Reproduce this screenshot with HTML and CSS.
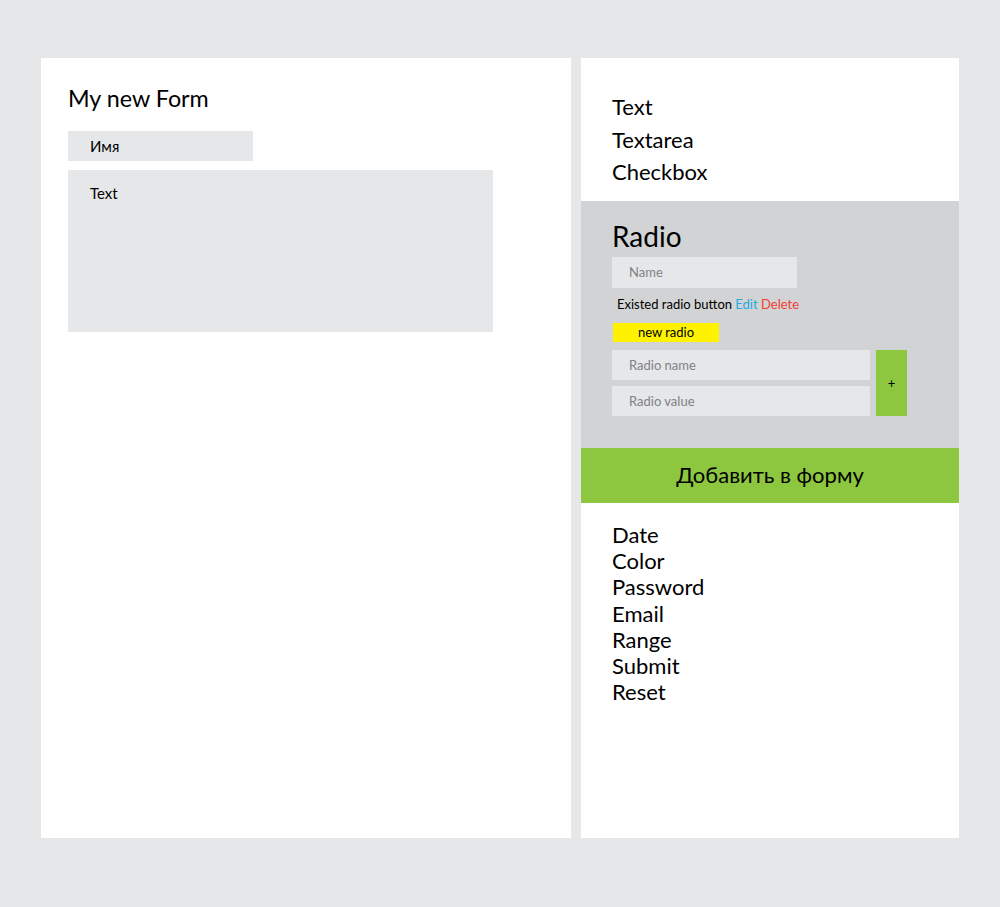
FILE: index.html
```html
<!DOCTYPE html>
<html lang="ru">
<head>
<meta charset="utf-8">
<title>Form builder</title>
<link rel="stylesheet" href="styles.css">
</head>
<body>
<div class="page">
  <section class="form-panel">
    <h1 class="form-title">My new Form</h1>
    <div class="field field-input">Имя</div>
    <div class="field field-textarea">Text</div>
  </section>
  <aside class="tools">
    <ul class="tool-list tool-list-top">
      <li>Text</li>
      <li>Textarea</li>
      <li>Checkbox</li>
    </ul>
    <div class="radio-box">
      <h2 class="radio-title">Radio</h2>
      <div class="ph-input name-input">Name</div>
      <div class="existed">Existed radio button <span class="edit">Edit</span> <span class="delete">Delete</span></div>
      <div class="new-radio">new radio</div>
      <div class="new-row">
        <div class="new-fields">
          <div class="ph-input wide">Radio name</div>
          <div class="ph-input wide">Radio value</div>
        </div>
        <div class="plus">+</div>
      </div>
    </div>
    <div class="add-btn">Добавить в форму</div>
    <ul class="tool-list tool-list-bottom">
      <li>Date</li>
      <li>Color</li>
      <li>Password</li>
      <li>Email</li>
      <li>Range</li>
      <li>Submit</li>
      <li>Reset</li>
    </ul>
  </aside>
</div>
</body>
</html>
```
FILE: styles.css
```css
* { box-sizing: border-box; }
body {
  margin: 0;
  background: #e6e7e8;
  font-family: Lato, "Open Sans", sans-serif;
  color: #000;
}
.page {
  display: flex;
  gap: 10px;
  padding: 58px 0 0 41px;
}
.form-panel {
  width: 530px;
  height: 780px;
  background: #fff;
  padding: 26px 0 0 27px;
}
.form-title {
  margin: 0;
  font-weight: 400;
  font-size: 23.3px;
  line-height: 28px;
}
.field {
  background: #e6e7e8;
  font-size: 15px;
  padding-left: 22px;
}
.field-input {
  margin-top: 19px;
  width: 185px;
  height: 30px;
  line-height: 30px;
}
.field-textarea {
  margin-top: 9px;
  width: 425px;
  height: 162px;
  padding-top: 13px;
  line-height: 20px;
}
.tools {
  width: 378px;
  height: 780px;
  background: #fff;
}
.tool-list {
  list-style: none;
  margin: 0;
  padding: 0 0 0 31px;
  font-size: 22px;
}
.tool-list-top {
  height: 143px;
  padding-top: 33px;
  line-height: 32.5px;
}
.tool-list-bottom {
  padding-top: 19px;
  line-height: 26.2px;
}
.radio-box {
  height: 247px;
  background: #d1d3d4;
  padding: 18px 0 0 31px;
}
.radio-title {
  margin: 0;
  font-weight: 400;
  font-size: 28px;
  line-height: 34px;
}
.ph-input {
  background: #e6e7e8;
  color: #808285;
  font-size: 13px;
  padding-left: 17px;
  height: 30px;
  line-height: 30px;
}
.name-input {
  margin-top: 4px;
  width: 185px;
  height: 31px;
  line-height: 31px;
}
.existed {
  margin-top: 7px;
  padding-left: 5px;
  font-size: 13px;
  line-height: 18px;
}
.edit { color: #27aae1; }
.delete { color: #ef4136; }
.new-radio {
  margin: 10px 0 0 1px;
  width: 106px;
  height: 19px;
  background: #fff200;
  font-size: 13px;
  line-height: 19px;
  text-align: center;
}
.new-row {
  margin-top: 8px;
  display: flex;
  gap: 6px;
}
.new-fields {
  display: flex;
  flex-direction: column;
  gap: 6px;
}
.wide { width: 258px; }
.plus {
  width: 31px;
  background: #8dc63f;
  display: flex;
  align-items: center;
  justify-content: center;
  font-size: 13px;
}
.add-btn {
  height: 55px;
  background: #8dc63f;
  font-size: 22px;
  line-height: 53px;
  text-align: center;
}
```
